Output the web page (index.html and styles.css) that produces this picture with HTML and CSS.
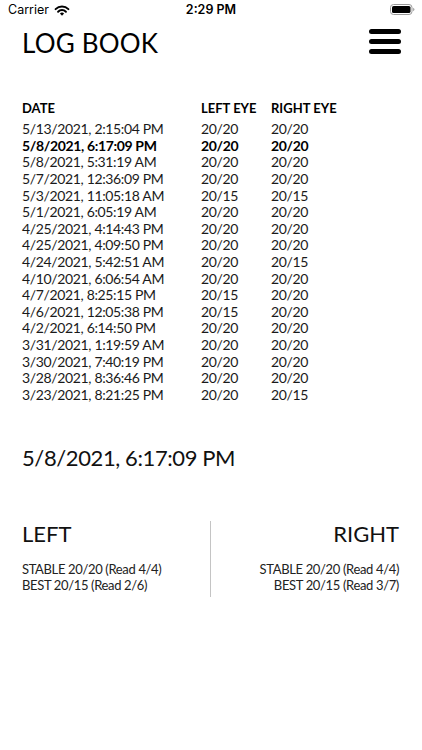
FILE: index.html
```html
<!DOCTYPE html>
<html>
<head>
<meta charset="utf-8">
<link rel="stylesheet" href="styles.css">
</head>
<body>
<div class="status">
  <div class="status-left">
    <span class="carrier">Carrier</span>
    <svg class="wifi" width="16" height="12" viewBox="0 0 16 12">
      <path d="M1.6 5.1 A9.2 9.2 0 0 1 14.4 5.1" fill="none" stroke="#000" stroke-width="2" stroke-linecap="round"/>
      <path d="M4.1 7.7 A5.6 5.6 0 0 1 11.9 7.7" fill="none" stroke="#000" stroke-width="2" stroke-linecap="round"/>
      <path d="M8 11.8 L5.9 9.6 A3 3 0 0 1 10.1 9.6 Z" fill="#000"/>
    </svg>
  </div>
  <div class="time">2:29 PM</div>
  <div class="status-right">
    <svg class="battery" width="25" height="11" viewBox="0 0 25 11">
      <rect x="0.5" y="0.5" width="21.5" height="10" rx="3" fill="none" stroke="#999" stroke-width="1"/>
      <rect x="2" y="2" width="18.5" height="7" rx="1.6" fill="#000"/>
      <path d="M23.2 3.8 Q24.4 4.2 24.4 5.5 Q24.4 6.8 23.2 7.2 Z" fill="#999"/>
    </svg>
  </div>
</div>

<header class="topbar">
  <h1 class="title">LOG BOOK</h1>
  <svg class="menu" width="32" height="25" viewBox="0 0 32 25">
    <rect x="0" y="0" width="32" height="5" rx="2.5" fill="#000"/>
    <rect x="0" y="10" width="32" height="5" rx="2.5" fill="#000"/>
    <rect x="0" y="20" width="32" height="5" rx="2.5" fill="#000"/>
  </svg>
</header>

<div class="log">
  <div class="log-head">
    <span>DATE</span><span>LEFT EYE</span><span>RIGHT EYE</span>
  </div>
  <div class="log-rows">
    <div class="row"><span>5/13/2021, 2:15:04 PM</span><span>20/20</span><span>20/20</span></div>
    <div class="row sel"><span>5/8/2021, 6:17:09 PM</span><span>20/20</span><span>20/20</span></div>
    <div class="row"><span>5/8/2021, 5:31:19 AM</span><span>20/20</span><span>20/20</span></div>
    <div class="row"><span>5/7/2021, 12:36:09 PM</span><span>20/20</span><span>20/20</span></div>
    <div class="row"><span>5/3/2021, 11:05:18 AM</span><span>20/15</span><span>20/15</span></div>
    <div class="row"><span>5/1/2021, 6:05:19 AM</span><span>20/20</span><span>20/20</span></div>
    <div class="row"><span>4/25/2021, 4:14:43 PM</span><span>20/20</span><span>20/20</span></div>
    <div class="row"><span>4/25/2021, 4:09:50 PM</span><span>20/20</span><span>20/20</span></div>
    <div class="row"><span>4/24/2021, 5:42:51 AM</span><span>20/20</span><span>20/15</span></div>
    <div class="row"><span>4/10/2021, 6:06:54 AM</span><span>20/20</span><span>20/20</span></div>
    <div class="row"><span>4/7/2021, 8:25:15 PM</span><span>20/15</span><span>20/20</span></div>
    <div class="row"><span>4/6/2021, 12:05:38 PM</span><span>20/15</span><span>20/20</span></div>
    <div class="row"><span>4/2/2021, 6:14:50 PM</span><span>20/20</span><span>20/20</span></div>
    <div class="row"><span>3/31/2021, 1:19:59 AM</span><span>20/20</span><span>20/20</span></div>
    <div class="row"><span>3/30/2021, 7:40:19 PM</span><span>20/20</span><span>20/20</span></div>
    <div class="row"><span>3/28/2021, 8:36:46 PM</span><span>20/20</span><span>20/20</span></div>
    <div class="row"><span>3/23/2021, 8:21:25 PM</span><span>20/20</span><span>20/15</span></div>
  </div>
</div>

<div class="selected-date">5/8/2021, 6:17:09 PM</div>

<div class="eyes">
  <div class="eye eye-left">
    <div class="eye-title">LEFT</div>
    <div class="eye-line">STABLE 20/20 (Read 4/4)</div>
    <div class="eye-line">BEST 20/15 (Read 2/6)</div>
  </div>
  <div class="divider"></div>
  <div class="eye eye-right">
    <div class="eye-title">RIGHT</div>
    <div class="eye-line">STABLE 20/20 (Read 4/4)</div>
    <div class="eye-line">BEST 20/15 (Read 3/7)</div>
  </div>
</div>
</body>
</html>
```

FILE: styles.css
```css
html, body {
  margin: 0;
  padding: 0;
  background: #fff;
}
body {
  width: 422px;
  height: 750px;
  font-family: "Lato", "Open Sans", sans-serif;
  color: #111;
  overflow: hidden;
}

.status {
  height: 20px;
  display: grid;
  grid-template-columns: 1fr auto 1fr;
  align-items: center;
  font-family: "Inter", "Roboto", sans-serif;
  font-size: 12.5px;
  color: #000;
}
.status-left {
  display: flex;
  align-items: center;
  padding-left: 8px;
  gap: 5px;
}
.carrier {
  font-weight: 400;
  line-height: 20px;
}
.wifi {
  display: block;
  margin-top: -1px;
}
.time {
  font-weight: 600;
  line-height: 20px;
}
.status-right {
  display: flex;
  justify-content: flex-end;
  padding-right: 7px;
}
.battery {
  display: block;
  margin-top: -1px;
}

.topbar {
  display: flex;
  justify-content: space-between;
  align-items: flex-start;
  padding: 0 21px 0 22px;
  height: 80px;
}
.title {
  margin: 7px 0 0 0;
  font-size: 26px;
  line-height: 32px;
  font-weight: 400;
  color: #000;
  letter-spacing: 0.2px;
}
.menu {
  display: block;
  margin-top: 9px;
}

.log {
  padding-left: 22px;
}
.log-head, .row {
  display: grid;
  grid-template-columns: 179px 70px 1fr;
}
.log-head {
  font-size: 13px;
  line-height: 16px;
  font-weight: 700;
  color: #000;
}
.log-rows {
  margin-top: 5.3px;
}
.row {
  font-size: 14px;
  line-height: 16.6px;
  color: #1a1a1a;
  letter-spacing: -0.35px;
}
.row.sel {
  font-weight: 700;
  color: #000;
}

.selected-date {
  margin-top: 41.7px;
  padding-left: 22px;
  font-size: 22px;
  line-height: 26px;
  color: #111;
  letter-spacing: -0.4px;
}

.eyes {
  margin-top: 50px;
  display: flex;
  height: 76px;
}
.eye {
  flex: 1;
}
.eye-left {
  padding-left: 22px;
}
.eye-right {
  padding-right: 23px;
  text-align: right;
}
.divider {
  width: 1px;
  background: #c4c4c4;
}
.eye-title {
  font-size: 22px;
  line-height: 26px;
  color: #111;
  margin-bottom: 14.2px;
}
.eye-line {
  font-size: 13px;
  line-height: 16px;
  color: #222;
  letter-spacing: -0.35px;
}
```
